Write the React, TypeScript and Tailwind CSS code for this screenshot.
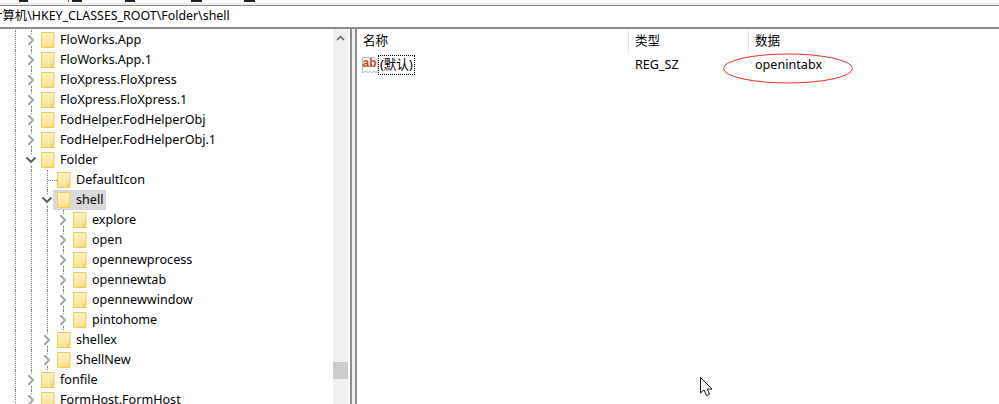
import React from "react";

type Row = {
  label: string;
  level: number;
  state?: "closed" | "open" | "leaf";
  selected?: boolean;
};

const rows: Row[] = [
  { label: "FloWorks.App", level: 0 },
  { label: "FloWorks.App.1", level: 0 },
  { label: "FloXpress.FloXpress", level: 0 },
  { label: "FloXpress.FloXpress.1", level: 0 },
  { label: "FodHelper.FodHelperObj", level: 0 },
  { label: "FodHelper.FodHelperObj.1", level: 0 },
  { label: "Folder", level: 0, state: "open" },
  { label: "DefaultIcon", level: 1, state: "leaf" },
  { label: "shell", level: 1, state: "open", selected: true },
  { label: "explore", level: 2 },
  { label: "open", level: 2 },
  { label: "opennewprocess", level: 2 },
  { label: "opennewtab", level: 2 },
  { label: "opennewwindow", level: 2 },
  { label: "pintohome", level: 2 },
  { label: "shellex", level: 1 },
  { label: "ShellNew", level: 1 },
  { label: "fonfile", level: 0 },
  { label: "FormHost.FormHost", level: 0 },
];

function FolderIcon() {
  return (
    <svg width="14" height="16" viewBox="0 0 14 16" className="shrink-0">
      <defs>
        <linearGradient id="folderFill" x1="0" y1="0" x2="0" y2="1">
          <stop offset="0" stopColor="#fff4c4" />
          <stop offset="1" stopColor="#fde08e" />
        </linearGradient>
      </defs>
      <path d="M.5.5h12.500v15H.5z" fill="url(#folderFill)" stroke="#efc95c" />
      <path d="M10.500 15.500v-3l2.500-1.500" fill="none" stroke="#efc95c" />
    </svg>
  );
}

function Guide() {
  return (
    <span className="flex h-5 w-4 shrink-0 justify-center">
      <span className="h-full border-l border-dotted border-[#808080]" />
    </span>
  );
}

function Toggle({ state }: { state: "closed" | "open" | "leaf" }) {
  if (state === "leaf") {
    return (
      <span className="flex h-5 w-4 shrink-0">
        <span className="ml-2 h-full border-l border-dotted border-[#808080]" />
        <span className="mt-[10px] h-0 w-[9px] -mr-2 border-t border-dotted border-[#808080]" />
      </span>
    );
  }
  return (
    <span className="flex h-5 w-4 shrink-0 flex-col items-center">
      <span className="h-1 border-l border-dotted border-[#808080]" />
      <span className="flex h-3 items-center justify-center">
        {state === "open" ? (
          <svg width="12" height="8" viewBox="0 0 12 8">
            <path d="M1.500 1.500 6 6l4.500-4.500" fill="none" stroke="#595959" strokeWidth="1.800" />
          </svg>
        ) : (
          <svg width="8" height="12" viewBox="0 0 8 12">
            <path d="M1.500 1.200 6 6l-4.500 4.800" fill="none" stroke="#a6a6a6" strokeWidth="2" />
          </svg>
        )}
      </span>
      <span className="h-1 border-l border-dotted border-[#808080]" />
    </span>
  );
}

function TreeRow({ row }: { row: Row }) {
  return (
    <div className="flex h-5 items-center pl-[7px] whitespace-nowrap">
      <Guide />
      {row.level > 0 && <Guide />}
      {row.level > 1 && <Guide />}
      <Toggle state={row.state ?? "closed"} />
      <div
        className={
          row.selected
            ? "flex h-5 items-center bg-[#d9d9d9] pl-1 pr-[3px] -ml-[2px]"
            : "flex h-5 items-center pl-[2px]"
        }
      >
        <FolderIcon />
        <span className="ml-[5px] text-black">{row.label}</span>
      </div>
    </div>
  );
}

function StringIcon() {
  return (
    <svg width="17" height="18" viewBox="0 0 17 18" className="shrink-0">
      <path
        d="M.5 1.500h12l3.500 3v10.500l-2 1.500-2-1-2 1-2-1-2 1-2-1-3.500 1z"
        fill="#fafafa"
        stroke="#b5b5b5"
      />
      <text x=".5" y="11" fontSize="12" fontWeight="700" fill="#d24726" fontFamily="Liberation Sans, sans-serif">
        ab
      </text>
    </svg>
  );
}

// only the bottom edge of the menu bar is still in the picture
function MenuStrip() {
  return (
    <div className="flex h-[3px] items-start bg-white">
      <span className="ml-[19px] h-[2px] w-[9px] bg-[#222222]" />
      <span className="ml-10 h-[2px] w-px bg-[#555555]" />
      <span className="ml-[3px] h-[2px] w-[10px] bg-[#222222]" />
      <span className="ml-[43px] h-[2px] w-[10px] bg-[#222222]" />
      <span className="ml-14 h-[2px] w-[11px] bg-[#222222]" />
      <span className="ml-[42px] h-[2px] w-[11px] bg-[#222222]" />
    </div>
  );
}

export default function App() {
  return (
    <div className="flex h-[404px] w-[999px] flex-col overflow-hidden bg-white text-[12.600px] text-black font-['Noto_Sans','Noto_Sans_CJK_SC',sans-serif]">
      <MenuStrip />
      <div className="h-[2px] bg-[#f0f0f0]" />
      <div className="h-px bg-[#8c8c8c]" />
      {/* address bar */}
      <div className="flex h-[21px] items-center overflow-hidden">
        <span className="-ml-[10px] whitespace-nowrap text-[12.400px]">计算机\HKEY_CLASSES_ROOT\Folder\shell</span>
      </div>
      <div className="h-[2px] bg-[#8c8c8c]" />

      <div className="flex min-h-0 flex-1">
        {/* key tree */}
        <div className="w-[333px] shrink-0 overflow-hidden pt-px">
          {rows.map((row) => (
            <TreeRow key={row.label} row={row} />
          ))}
        </div>

        {/* scrollbar */}
        <div className="flex w-[15px] shrink-0 flex-col bg-[#f0f0f0]">
          <div className="flex h-[17px] items-center justify-center">
            <svg width="9" height="6" viewBox="0 0 9 6">
              <path d="M1 5l3.500-3.500L8 5" fill="none" stroke="#606060" strokeWidth="1.500" />
            </svg>
          </div>
          <div className="mt-[316px] h-[17px] bg-[#cdcdcd]" />
        </div>

        <div className="w-[2px] shrink-0 bg-white" />
        <div className="w-[2px] shrink-0 bg-[#8c8c8c]" />
        <div className="w-[3px] shrink-0 bg-[#f0f0f0]" />
        <div className="w-[2px] shrink-0 bg-[#8c8c8c]" />

        {/* values */}
        <div className="relative min-w-0 flex-1">
          <div className="flex h-[24px] items-stretch">
            <div className="flex w-[272px] items-center border-r border-[#e5e5e5] pl-[6px] pt-px">名称</div>
            <div className="flex w-[120px] items-center border-r border-[#e5e5e5] pl-[6px] pt-px">类型</div>
            <div className="flex items-center pl-[6px] pt-px">数据</div>
          </div>
          <div className="mt-[2px] flex h-5 items-center">
            <div className="flex w-[272px] items-center pl-[5px]">
              <StringIcon />
              <span className="-ml-px flex h-5 items-center border border-dotted border-black px-px">(默认)</span>
            </div>
            <div className="w-[120px] pl-[6px]">REG_SZ</div>
            <div className="pl-[6px]">openintabx</div>
          </div>

          {/* red marker round the value */}
          <svg width="132" height="32" viewBox="0 0 132 32" className="absolute left-[365px] top-[24px]">
            <ellipse cx="66" cy="15.500" rx="64.500" ry="14.500" fill="none" stroke="#ee2c2c" strokeWidth="1" />
          </svg>

          {/* mouse cursor */}
          <svg width="13" height="20" viewBox="0 0 13 20" className="absolute left-[343px] top-[348px]">
            <path
              d="M.5.500v15.500l3.500-3 2.500 5.500 3-1.200L7.300 12H12z"
              fill="#ffffff"
              stroke="#1a1a1a"
              strokeWidth="1"
            />
          </svg>
        </div>
      </div>
    </div>
  );
}
